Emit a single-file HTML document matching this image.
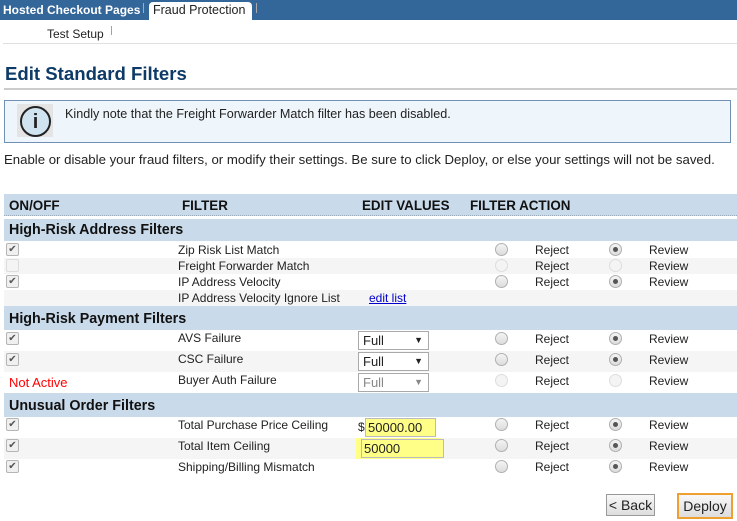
<!DOCTYPE html><html><head><style>
body{margin:0;width:737px;height:521px;overflow:hidden;font-family:"Liberation Sans",Arial,sans-serif;font-size:12px;color:#222;background:#fff;position:relative}
.a{position:absolute;white-space:nowrap}
.row{position:absolute;left:4px;width:733px}
.sec{background:#c9daea;font-weight:bold;font-size:14.3px;color:#111}
.cb{position:absolute;left:2px;width:11px;height:11px;border:1px solid #b5b5b5;border-radius:2px;background:#f0f0f0;font-size:10px;line-height:11px;text-align:center;color:#555}
.rd{position:absolute;width:11px;height:11px;border:1px solid #b0b0b0;border-radius:50%;background:linear-gradient(#f4f4f4,#dcdcdc)}
.rd.on::after{content:"";position:absolute;left:3px;top:3px;width:5px;height:5px;border-radius:50%;background:#555}
.rd.dis{border-color:#ddd;background:#f4f4f4}
.sel{position:absolute;left:354px;border:1px solid #a9a9a9;background:#fff;font-size:13px;line-height:17px;padding-left:4px;box-sizing:border-box;width:71px;height:19px}
.sel span{position:absolute;right:5px;top:0;font-size:9px}
</style></head><body>
<div class="a" style="left:0;top:0;width:737px;height:20px;background:#336699"></div>
<div class="a" style="left:3px;top:3px;color:#fff;font-weight:bold;font-size:12px">Hosted Checkout Pages</div>
<div class="a" style="left:143px;top:3px;width:1px;height:10px;background:#aaa"></div>
<div class="a" style="left:149px;top:2px;width:103px;height:18px;background:#fff;border-radius:4px 4px 0 0"></div>
<div class="a" style="left:153px;top:3px;color:#222;font-size:12.5px">Fraud Protection</div>
<div class="a" style="left:256px;top:3px;width:1px;height:10px;background:#aaa"></div>
<div class="a" style="left:47px;top:27px;font-size:12px">Test Setup</div>
<div class="a" style="left:111px;top:26px;width:1px;height:9px;background:#8ab"></div>
<div class="a" style="left:3px;top:43px;width:734px;height:1px;background:#e0e0e0"></div>
<div class="a" style="left:5px;top:63px;font-size:18.6px;font-weight:bold;color:#0d3a66">Edit Standard Filters</div>
<div class="a" style="left:4px;top:88px;width:733px;height:2px;background:#ccc"></div>
<div class="a" style="left:4px;top:100px;width:725px;height:41px;border:1px solid #6f8fb5;background:#eef5fb"></div>
<div class="a" style="left:17px;top:104px;width:36px;height:33px;background:#e4e4e4"></div>
<div class="a" style="left:20px;top:106px;width:27px;height:27px;border:2px solid #222;border-radius:50%;background:#cfe3f0;text-align:center;font-size:20px;font-weight:bold;line-height:28px;color:#222">i</div>
<div class="a" style="left:65px;top:107px;font-size:12.6px;color:#222">Kindly note that the Freight Forwarder Match filter has been disabled.</div>
<div class="a" style="left:4px;top:152px;font-size:13.2px">Enable or disable your fraud filters, or modify their settings. Be sure to click Deploy, or else your settings will not be saved.</div>

<div class="row" style="top:194px;height:21px;background:#c9daea;font-weight:bold;font-size:13.4px;color:#111;border-bottom:1px dotted #9ab">
<span class="a" style="left:5px;top:4px">ON/OFF</span><span class="a" style="left:178px;top:4px">FILTER</span><span class="a" style="left:358px;top:4px">EDIT VALUES</span><span class="a" style="left:466px;top:4px">FILTER ACTION</span></div>
<div class="row sec" style="top:219px;height:22px"><span class="a" style="left:5px;top:3px">High-Risk Address Filters</span></div>

<div class="row" style="top:242px;height:16px;background:#fff"><div class="cb" style="top:1px">✔</div><span class="a" style="left:174px;top:1px">Zip Risk List Match</span><div class="rd" style="left:491px;top:1px"></div><span class="a" style="left:531px;top:1px">Reject</span><div class="rd on" style="left:605px;top:1px"></div><span class="a" style="left:645px;top:1px">Review</span></div>
<div class="row" style="top:258px;height:16px;background:#f5f5f5"><div class="cb" style="top:1px;border-color:#ddd;background:#f4f4f4"></div><span class="a" style="left:174px;top:1px">Freight Forwarder Match</span><div class="rd dis" style="left:491px;top:1px"></div><span class="a" style="left:531px;top:1px">Reject</span><div class="rd dis" style="left:605px;top:1px"></div><span class="a" style="left:645px;top:1px">Review</span></div>
<div class="row" style="top:274px;height:16px;background:#fff"><div class="cb" style="top:1px">✔</div><span class="a" style="left:174px;top:1px">IP Address Velocity</span><div class="rd" style="left:491px;top:1px"></div><span class="a" style="left:531px;top:1px">Reject</span><div class="rd on" style="left:605px;top:1px"></div><span class="a" style="left:645px;top:1px">Review</span></div>
<div class="row" style="top:290px;height:16px;background:#f5f5f5"><span class="a" style="left:174px;top:1px">IP Address Velocity Ignore List</span><span class="a" style="left:365px;top:1px;color:#00c;text-decoration:underline">edit list</span></div>

<div class="row sec" style="top:306px;height:24px"><span class="a" style="left:5px;top:5px">High-Risk Payment Filters</span></div>
<div class="row" style="top:330px;height:21px;background:#fff"><div class="cb" style="top:2px">✔</div><span class="a" style="left:174px;top:1px">AVS Failure</span><div class="sel" style="top:1px">Full<span>▼</span></div><div class="rd" style="left:491px;top:2px"></div><span class="a" style="left:531px;top:2px">Reject</span><div class="rd on" style="left:605px;top:2px"></div><span class="a" style="left:645px;top:2px">Review</span></div>
<div class="row" style="top:351px;height:21px;background:#f5f5f5"><div class="cb" style="top:2px">✔</div><span class="a" style="left:174px;top:1px">CSC Failure</span><div class="sel" style="top:1px">Full<span>▼</span></div><div class="rd" style="left:491px;top:2px"></div><span class="a" style="left:531px;top:2px">Reject</span><div class="rd on" style="left:605px;top:2px"></div><span class="a" style="left:645px;top:2px">Review</span></div>
<div class="row" style="top:372px;height:21px;background:#fff"><span class="a" style="left:5px;top:3px;color:#f00;font-size:13px">Not Active</span><span class="a" style="left:174px;top:1px">Buyer Auth Failure</span><div class="sel" style="top:1px;color:#888">Full<span>▼</span></div><div class="rd dis" style="left:491px;top:2px"></div><span class="a" style="left:531px;top:2px">Reject</span><div class="rd dis" style="left:605px;top:2px"></div><span class="a" style="left:645px;top:2px">Review</span></div>

<div class="row sec" style="top:393px;height:24px"><span class="a" style="left:5px;top:5px">Unusual Order Filters</span></div>
<div class="row" style="top:417px;height:21px;background:#fff"><div class="cb" style="top:1px">✔</div><span class="a" style="left:174px;top:1px">Total Purchase Price Ceiling</span><span class="a" style="left:354px;top:3px">$</span><div class="a" style="left:361px;top:1px;width:67px;height:17px;border:1px solid #bbb;background:#ffff88;font-size:13px;line-height:17px;padding-left:2px">50000.00</div><div class="rd" style="left:491px;top:1px"></div><span class="a" style="left:531px;top:1px">Reject</span><div class="rd on" style="left:605px;top:1px"></div><span class="a" style="left:645px;top:1px">Review</span></div>
<div class="row" style="top:438px;height:21px;background:#f5f5f5"><div class="cb" style="top:1px">✔</div><span class="a" style="left:174px;top:1px">Total Item Ceiling</span><div class="a" style="left:352px;top:0;width:86px;height:21px;background:#ffff88"></div><div class="a" style="left:357px;top:1px;width:79px;height:17px;border:1px solid #bbb;background:#ffff88;font-size:13px;line-height:17px;padding-left:2px">50000</div><div class="rd" style="left:491px;top:1px"></div><span class="a" style="left:531px;top:1px">Reject</span><div class="rd on" style="left:605px;top:1px"></div><span class="a" style="left:645px;top:1px">Review</span></div>
<div class="row" style="top:459px;height:18px;background:#fff"><div class="cb" style="top:1px">✔</div><span class="a" style="left:174px;top:1px">Shipping/Billing Mismatch</span><div class="rd" style="left:491px;top:1px"></div><span class="a" style="left:531px;top:1px">Reject</span><div class="rd on" style="left:605px;top:1px"></div><span class="a" style="left:645px;top:1px">Review</span></div>

<div class="a" style="left:606px;top:494px;width:47px;height:20px;border:1px solid #999;background:linear-gradient(#f8f8f8,#ddd);font-size:14px;line-height:20px;text-align:center">&lt; Back</div>
<div class="a" style="left:677px;top:493px;width:52px;height:22px;border:2px solid #f0a030;background:linear-gradient(#f8f8f8,#ddd);font-size:14px;line-height:22px;text-align:center">Deploy</div>
</body></html>
